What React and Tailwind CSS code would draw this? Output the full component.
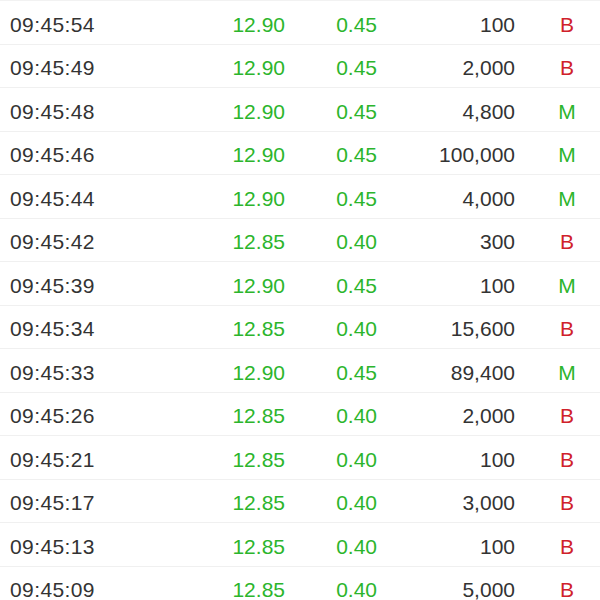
const rows = [
  ["09:45:54", "12.90", "0.45", "100", "B"],
  ["09:45:49", "12.90", "0.45", "2,000", "B"],
  ["09:45:48", "12.90", "0.45", "4,800", "M"],
  ["09:45:46", "12.90", "0.45", "100,000", "M"],
  ["09:45:44", "12.90", "0.45", "4,000", "M"],
  ["09:45:42", "12.85", "0.40", "300", "B"],
  ["09:45:39", "12.90", "0.45", "100", "M"],
  ["09:45:34", "12.85", "0.40", "15,600", "B"],
  ["09:45:33", "12.90", "0.45", "89,400", "M"],
  ["09:45:26", "12.85", "0.40", "2,000", "B"],
  ["09:45:21", "12.85", "0.40", "100", "B"],
  ["09:45:17", "12.85", "0.40", "3,000", "B"],
  ["09:45:13", "12.85", "0.40", "100", "B"],
  ["09:45:09", "12.85", "0.40", "5,000", "B"],
];

export default function App() {
  return (
    <div
      className="w-[600px] h-[600px] overflow-hidden bg-white border-t border-[#f2f2f2]"
      style={{ fontFamily: '"Liberation Sans", Arial, sans-serif' }}
    >
      {rows.map((r, i) => (
        <div
          key={i}
          className="flex items-center h-[43.5px] border-b border-[#f0f0f0] text-[21px] pt-[4px]"
        >
          <div className="w-[200px] shrink-0 pl-[10px] text-[#333333] tracking-[0.4px]">{r[0]}</div>
          <div className="w-[85px] shrink-0 text-right text-[#2cb52c]">{r[1]}</div>
          <div className="w-[92px] shrink-0 text-right text-[#2cb52c]">{r[2]}</div>
          <div className="w-[138px] shrink-0 text-right text-[#333333]">{r[3]}</div>
          <div
            className={
              "w-[52px] ml-[26px] shrink-0 text-center " +
              (r[4] === "B" ? "text-[#d0212b]" : "text-[#2cb52c]")
            }
          >
            {r[4]}
          </div>
        </div>
      ))}
    </div>
  );
}
